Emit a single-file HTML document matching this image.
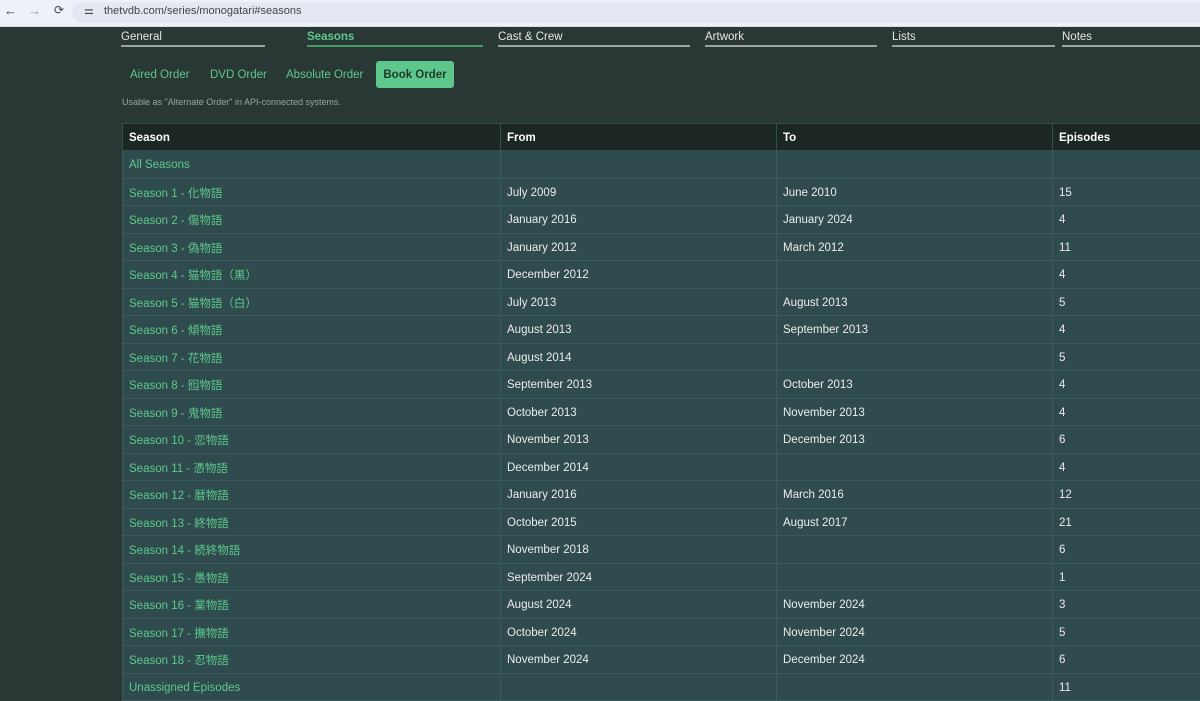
<!DOCTYPE html>
<html><head><meta charset="utf-8"><style>
*{margin:0;padding:0;box-sizing:border-box}
body{width:1200px;height:699px;overflow:hidden;background:#2a3835;font-family:"Liberation Sans","Noto Sans CJK JP",sans-serif;position:relative}
.bar{position:absolute;left:0;top:0;width:1200px;height:27px;background:#eef1f8;border-bottom:1px solid #d8dce4}
.url{position:absolute;left:72px;top:2px;width:1140px;height:21px;border-radius:11px;background:#e3e8f3}
.bar span{position:absolute;top:5px;font-size:11px;color:#444}
.tab{position:absolute;top:30px;font-size:11.5px;color:#e6e6e6;border-bottom:2px solid #9aa5a3;height:17px;padding-top:1px}
.tab.on{color:#5ec88c;font-weight:bold;border-color:#3f9a66}
.ord{position:absolute;top:69px;font-size:11.5px;color:#5ec88c}
.btn{position:absolute;left:376px;top:61px;width:78px;height:27px;background:#5ec88c;border-radius:3px;color:#1f3a2c;font-size:11.5px;font-weight:bold;text-align:center;line-height:28px}
.note{position:absolute;left:122px;top:97px;font-size:9px;color:#9aa3a1}
table{position:absolute;left:122px;top:123px;width:1100px;border-collapse:collapse;font-size:11.5px}
th{background:#1c2625;color:#fff;text-align:left;height:27px;padding:2px 0 0 6px;border:1px solid #33504f}
td{background:#2f4b4d;color:#ececec;height:27.5px;padding:2px 0 0 6px;border:1px solid #3b5b5c}
td:first-child{color:#5ec88c}
</style></head><body>
<div class="bar"><span style="left:4px;font-size:13px;top:3px">←</span><span style="left:28px;font-size:13px;top:3px;color:#999">→</span><span style="left:54px;font-size:12px;top:3px">⟳</span><div class="url"></div><span style="left:84px;top:4px">⚌</span><span style="left:104px">thetvdb.com/series/monogatari#seasons</span></div>
<div class="tab" style="left:121px;width:144px">General</div>
<div class="tab on" style="left:307px;width:176px">Seasons</div>
<div class="tab" style="left:498px;width:192px">Cast &amp; Crew</div>
<div class="tab" style="left:705px;width:172px">Artwork</div>
<div class="tab" style="left:892px;width:163px">Lists</div>
<div class="tab" style="left:1062px;width:150px">Notes</div>
<div class="ord" style="left:130px">Aired Order</div>
<div class="ord" style="left:210px">DVD Order</div>
<div class="ord" style="left:286px">Absolute Order</div>
<div class="btn">Book Order</div>
<div class="note">Usable as "Alternate Order" in API-connected systems.</div>
<table>
<colgroup><col style="width:378px"><col style="width:276px"><col style="width:276px"><col></colgroup>
<tr><th>Season</th><th>From</th><th>To</th><th>Episodes</th></tr>
<tr><td>All Seasons</td><td></td><td></td><td></td></tr>
<tr><td>Season 1 - 化物語</td><td>July 2009</td><td>June 2010</td><td>15</td></tr>
<tr><td>Season 2 - 傷物語</td><td>January 2016</td><td>January 2024</td><td>4</td></tr>
<tr><td>Season 3 - 偽物語</td><td>January 2012</td><td>March 2012</td><td>11</td></tr>
<tr><td>Season 4 - 猫物語（黒）</td><td>December 2012</td><td></td><td>4</td></tr>
<tr><td>Season 5 - 猫物語（白）</td><td>July 2013</td><td>August 2013</td><td>5</td></tr>
<tr><td>Season 6 - 傾物語</td><td>August 2013</td><td>September 2013</td><td>4</td></tr>
<tr><td>Season 7 - 花物語</td><td>August 2014</td><td></td><td>5</td></tr>
<tr><td>Season 8 - 囮物語</td><td>September 2013</td><td>October 2013</td><td>4</td></tr>
<tr><td>Season 9 - 鬼物語</td><td>October 2013</td><td>November 2013</td><td>4</td></tr>
<tr><td>Season 10 - 恋物語</td><td>November 2013</td><td>December 2013</td><td>6</td></tr>
<tr><td>Season 11 - 憑物語</td><td>December 2014</td><td></td><td>4</td></tr>
<tr><td>Season 12 - 暦物語</td><td>January 2016</td><td>March 2016</td><td>12</td></tr>
<tr><td>Season 13 - 終物語</td><td>October 2015</td><td>August 2017</td><td>21</td></tr>
<tr><td>Season 14 - 続終物語</td><td>November 2018</td><td></td><td>6</td></tr>
<tr><td>Season 15 - 愚物語</td><td>September 2024</td><td></td><td>1</td></tr>
<tr><td>Season 16 - 業物語</td><td>August 2024</td><td>November 2024</td><td>3</td></tr>
<tr><td>Season 17 - 撫物語</td><td>October 2024</td><td>November 2024</td><td>5</td></tr>
<tr><td>Season 18 - 忍物語</td><td>November 2024</td><td>December 2024</td><td>6</td></tr>
<tr><td>Unassigned Episodes</td><td></td><td></td><td>11</td></tr>
</table>
</body></html>
